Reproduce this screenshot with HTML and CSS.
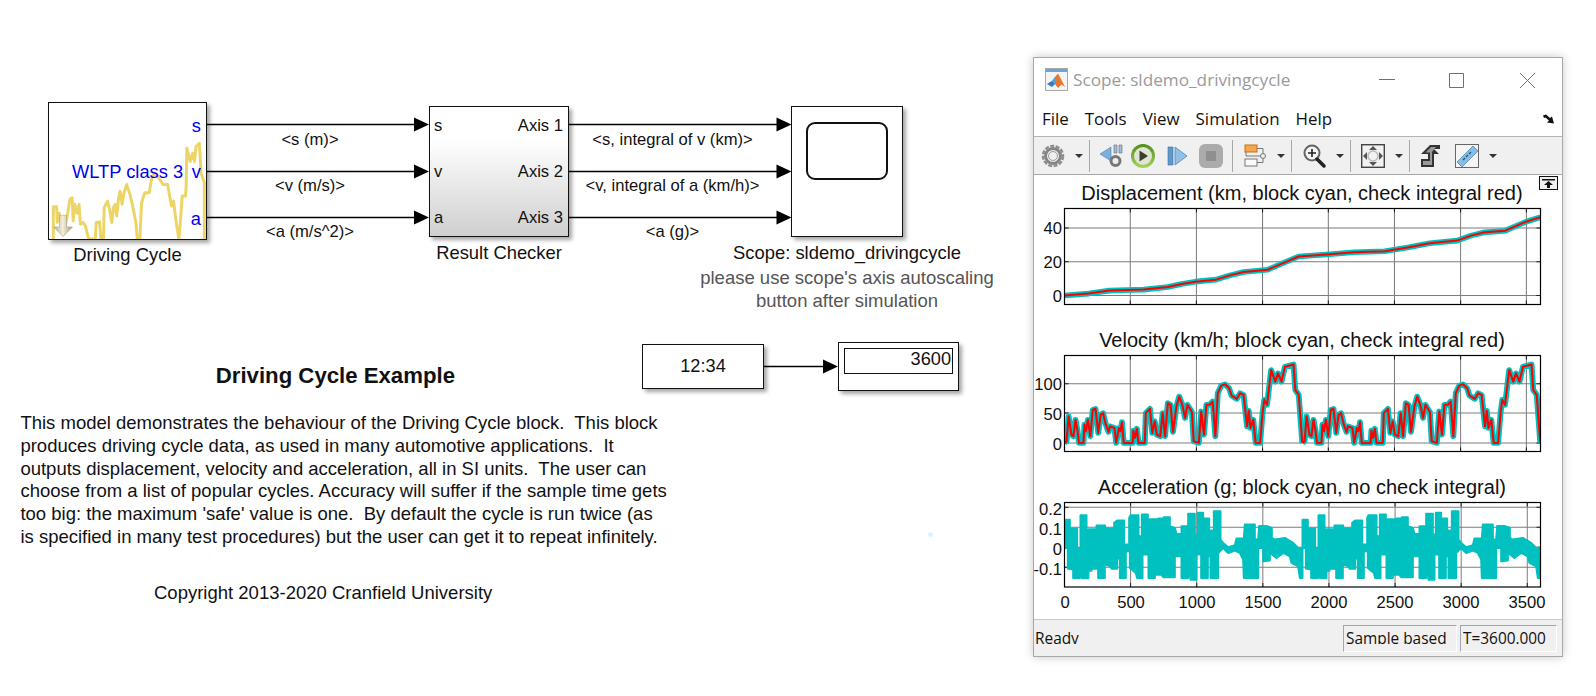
FILE: index.html
```html
<!DOCTYPE html>
<html lang="en">
<head>
<meta charset="utf-8">
<title>Scope: sldemo_drivingcycle</title>
<link rel="stylesheet" href="styles.css">
</head>
<body>
<main class="canvas">
  <svg class="wires" width="1030" height="420" viewBox="0 0 1030 420">
    <path class="wire" d="M207 124.5H416M207 171.5H416M207 217.5H416M569 124.5H778M569 171.5H778M569 217.5H778M764 366.5H824"/>
    <path class="head" d="M414 117.5L429 124.5L414 131.5ZM414 164.5L429 171.5L414 178.5ZM414 210.5L429 217.5L414 224.5ZM776.500 117.5L791.500 124.500L776.500 131.500ZM776.500 164.500L791.500 171.500L776.500 178.500ZM776.500 210.500L791.500 217.500L776.500 224.500ZM823 359.500L838 366.500L823 373.500Z"/>
    <text class="wire-text" x="310" y="145">&lt;s (m)&gt;</text>
    <text class="wire-text" x="310" y="191">&lt;v (m/s)&gt;</text>
    <text class="wire-text" x="310" y="237">&lt;a (m/s^2)&gt;</text>
    <text class="wire-text" x="672.500" y="145">&lt;s, integral of v (km)&gt;</text>
    <text class="wire-text" x="672.500" y="191">&lt;v, integral of a (km/h)&gt;</text>
    <text class="wire-text" x="672.500" y="237">&lt;a (g)&gt;</text>
  </svg>

  <section class="block source">
    <svg class="spark" viewBox="55 38 475 412" preserveAspectRatio="none">
      <polyline class="spark-line" points="68,450 68,352 78,352 80,400 86,372 92,395 100,380 106,402 112,370 118,330 125,325 128,395 133,345 140,372 146,345 150,405 158,400 165,410 175,450 182,450 195,450 198,400 208,398 212,450 220,450 222,355 232,335 238,360 245,400 250,355 255,345 260,380 265,330 270,305 276,345 282,310 290,285 300,315 308,350 318,400 322,450 330,450 335,340 345,310 358,310 365,270 372,250 385,262 400,285 414,285 420,320 426,350 432,335 436,370 440,400 448,450 452,405 458,320 468,320 470,290 472,175 482,215 490,190 495,215 500,170 510,160 515,250 525,280 525,450"/>
    </svg>
    <svg class="lib-arrow" width="20" height="22" viewBox="0 0 20 22">
      <defs>
        <linearGradient id="arrowFill" x1="0" x2="1" y1="0" y2="0">
          <stop offset="0" stop-color="#b9b08a"/><stop offset=".5" stop-color="#f1eeda"/><stop offset="1" stop-color="#a39a72"/>
        </linearGradient>
      </defs>
      <path d="M6.500 0H13.500V12H19.500L10 21.500L.5 12H6.500Z" fill="url(#arrowFill)" stroke="#a8a27f" stroke-width=".6"/>
    </svg>
    <span class="port port-s">s</span>
    <span class="port port-v">v</span>
    <span class="port port-a">a</span>
    <span class="source-name">WLTP class 3</span>
    <span class="caption">Driving Cycle</span>
  </section>

  <section class="block checker">
    <span class="in in-s">s</span><span class="in in-v">v</span><span class="in in-a">a</span>
    <span class="out out-1">Axis 1</span><span class="out out-2">Axis 2</span><span class="out out-3">Axis 3</span>
    <span class="caption">Result Checker</span>
  </section>

  <section class="block scope">
    <div class="screen"></div>
    <span class="caption">Scope: sldemo_drivingcycle</span>
  </section>
  <p class="scope-note">please use scope's axis autoscaling<br>button after simulation</p>

  <section class="block clock">12:34</section>
  <section class="block display"><div class="readout">3600</div></section>

  <h2 class="doc-title">Driving Cycle Example</h2>
  <p class="doc-body">This model demonstrates the behaviour of the Driving Cycle block.  This block
produces driving cycle data, as used in many automotive applications.  It
outputs displacement, velocity and acceleration, all in SI units.  The user can
choose from a list of popular cycles. Accuracy will suffer if the sample time gets
too big: the maximum 'safe' value is one.  By default the cycle is run twice (as
is specified in many test procedures) but the user can get it to repeat infinitely.</p>
  <p class="doc-copy">Copyright 2013-2020 Cranfield University</p>
  <i class="speck"></i>

  <article class="window">
    <header class="titlebar">
      <svg class="app-icon" width="23" height="23" viewBox="0 0 23 23">
        <rect x=".5" y=".5" width="22" height="22" fill="#f4f4f4" stroke="#a9a9a9"/>
        <rect x="1" y="1" width="21" height="3" fill="#6aa5d8"/>
        <path d="M2 16L7 13L10 9L13 5.500L16 11L20 19L16.500 16.500L13 20L10 16L7 15Z" fill="#e8762b"/>
        <path d="M2 16L7 13L10 16L7 19Z" fill="#2f7fc4"/>
        <path d="M7 13L10 9L11.500 12L10 16Z" fill="#4aa6dd"/>
      </svg>
      <span class="title-text">Scope: sldemo_drivingcycle</span>
      <svg class="win-controls" width="157" height="16" viewBox="0 0 157 16">
        <path d="M0 7.500H16M70.500 1.500H84.500V15.500H70.500ZM141 1L156 16M156 1L141 16"/>
      </svg>
    </header>
    <nav class="menubar">
      <span class="menu-item">File</span>
      <span class="menu-item">Tools</span>
      <span class="menu-item">View</span>
      <span class="menu-item">Simulation</span>
      <span class="menu-item">Help</span>
      <svg class="menu-pin" width="12" height="10" viewBox="0 0 12 10">
        <path d="M0 1.500L3 .5L7 4L9 2.500L11 9.500L4 8.500L6 6.500L2.500 3.500L1 4Z" fill="#111"/>
      </svg>
    </nav>
    <div class="toolbar">
      <svg class="tool first" viewBox="0 0 24 24">
        <circle cx="12" cy="12" r="10" fill="none" stroke="#8f8f8f" stroke-width="2.500" stroke-dasharray="4 1.500"/>
        <circle cx="12" cy="12" r="7.500" fill="none" stroke="#858585" stroke-width="3"/>
        <circle cx="12" cy="12" r="4.500" fill="#eee" stroke="#9a9a9a"/>
      </svg>
      <i class="drop"></i><i class="sep"></i>
      <svg class="tool" viewBox="0 0 24 24">
        <path d="M0 10L11 3V17Z" fill="#7aaedb" stroke="#4f7fb0" stroke-width=".6"/>
        <path d="M14 1H17V9H14ZM19 1H22V9H19Z" fill="#9cbfdd" stroke="#6a6a6a" stroke-width=".6"/>
        <circle cx="15.500" cy="17" r="4.500" fill="#eee" stroke="#777" stroke-width="3"/>
      </svg>
      <svg class="tool snug" viewBox="0 0 24 24">
        <defs>
          <linearGradient id="playRing" x1="0" x2="0" y1="0" y2="1">
            <stop offset="0" stop-color="#4f8c18"/><stop offset="1" stop-color="#a5d45c"/>
          </linearGradient>
        </defs>
        <circle cx="12" cy="12" r="12" fill="url(#playRing)"/>
        <circle cx="12" cy="12" r="9" fill="#dfe6cf"/>
        <path d="M8.500 6.500L17 12L8.500 17.500Z" fill="#3b3f30"/>
      </svg>
      <svg class="tool wide" viewBox="0 0 24 24">
        <path d="M3 3H8V21H3Z" fill="#5f98cb" stroke="#3f6f9e" stroke-width=".6"/>
        <path d="M10 3L22 12L10 21Z" fill="#8fc0e8" stroke="#5688b5" stroke-width=".8"/>
      </svg>
      <svg class="tool wide" viewBox="0 0 24 24">
        <rect x="0" y="0" width="24" height="24" rx="6" fill="#ababab"/>
        <rect x="7" y="7" width="10" height="10" fill="#8f8f8f"/>
      </svg>
      <i class="sep far"></i>
      <svg class="tool" viewBox="0 0 24 24">
        <rect x="2" y="1" width="12" height="7" fill="#f3a84e" stroke="#c96f14"/>
        <rect x="2" y="15" width="12" height="7" fill="#fafafa" stroke="#777"/>
        <circle cx="20" cy="12" r="2.500" fill="#eee" stroke="#777"/>
        <path d="M14 4.500H20V9.500M14 18.500H20V14.500M3 8V12H17" fill="none" stroke="#777"/>
      </svg>
      <i class="drop"></i><i class="sep"></i>
      <svg class="tool" viewBox="0 0 24 24">
        <circle cx="10" cy="9" r="7.500" fill="#f4f4f4" stroke="#666" stroke-width="2"/>
        <path d="M10 5V13M6 9H14" stroke="#222" stroke-width="1.600"/>
        <path d="M15 15L22 22" stroke="#222" stroke-width="3.500" stroke-linecap="round"/>
      </svg>
      <i class="drop"></i><i class="sep"></i>
      <svg class="tool" viewBox="0 0 24 24">
        <rect x=".7" y=".7" width="22.600" height="22.600" fill="#f2f2f2" stroke="#444" stroke-width="1.400"/>
        <path d="M12 2L16 6H8ZM12 22L8 18H16ZM2 12L6 8V16ZM22 12L18 16V8Z" fill="#555"/>
        <circle cx="12" cy="12" r="5" fill="none" stroke="#bbb" stroke-width="1.500"/>
      </svg>
      <i class="drop"></i><i class="sep"></i>
      <svg class="tool snug" viewBox="0 0 24 24">
        <path d="M2 23V15H9V10H2L11 1H21V5H15L20 10H15V23Z" fill="#333"/>
        <path d="M4 21V17H11V8.500H6.500L12 3H17L12.500 8.500H13V21Z" fill="#9a9a9a"/>
      </svg>
      <svg class="tool roomy" viewBox="0 0 24 24">
        <rect x=".5" y=".5" width="23" height="23" fill="#f5f5f5" stroke="#666"/>
        <path d="M2 18L18 2L23 7L7 23Z" fill="#86bfe6" stroke="#4d86b2" stroke-width=".8"/>
        <path d="M8 16L10 14M11 13L13 11M14 10L16 8" stroke="#1f5479" stroke-width="1.300"/>
      </svg>
      <i class="drop"></i>
    </div>

    <div class="plots">
      <button class="undock" type="button" aria-label="Undock">
        <svg width="13" height="9" viewBox="0 0 13 9"><path d="M0 0H13V1.500H0ZM6.500 2L11 6H8V9H5V6H2Z" fill="#111"/></svg>
      </button>
      <figure class="plot">
        <figcaption class="plot-title">Displacement (km, block cyan, check integral red)</figcaption>
        <svg class="chart" width="528" height="97">
          <svg x="30.500" y="0.500" width="476" height="96" viewBox="100 98 1382 290" preserveAspectRatio="none">
            <path class="grid" d="M291 98V388M483 98V388M675 98V388M866 98V388M1058 98V388M1250 98V388M1441 98V388M100 157H1482M100 259H1482M100 361H1482"/>
            <path class="tick" d="M291 98V110M483 98V110M675 98V110M866 98V110M1058 98V110M1250 98V110M1441 98V110M291 388V376M483 388V376M675 388V376M866 388V376M1058 388V376M1250 388V376M1441 388V376M100 157H112M100 259H112M100 361H112M1482 157H1470M1482 259H1470M1482 361H1470"/>
            <polyline class="trace-cyan" points="100,361 170,355 230,346 330,343 400,335 440,326 480,319 540,313 580,300 620,290 690,283 730,265 780,243 870,236 940,230 1030,227 1100,215 1160,203 1240,195 1280,180 1320,170 1380,165 1440,138 1482,124"/>
            <polyline class="trace-red" points="100,361 170,355 230,346 330,343 400,335 440,326 480,319 540,313 580,300 620,290 690,283 730,265 780,243 870,236 940,230 1030,227 1100,215 1160,203 1240,195 1280,180 1320,170 1380,165 1440,138 1482,124"/>
          </svg>
          <rect class="frame" x="30.500" y="0.500" width="476" height="96"/>
          <text class="y-label" x="28" y="25.500">40</text>
          <text class="y-label" x="28" y="59.500">20</text>
          <text class="y-label" x="28" y="93.500">0</text>
        </svg>
      </figure>
      <figure class="plot">
        <figcaption class="plot-title">Velocity (km/h; block cyan, check integral red)</figcaption>
        <svg class="chart" width="528" height="97">
          <svg x="30.500" y="0.500" width="476" height="96" viewBox="100 91 1382 290" preserveAspectRatio="none">
            <defs>
              <polyline id="vel" points="100,355 106,350 112,275 120,330 126,335 132,285 138,320 142,355 155,355 158,300 162,320 168,285 175,335 182,255 190,252 198,325 205,270 212,265 220,300 228,322 232,305 245,310 250,355 258,310 262,320 267,292 272,355 298,355 300,318 305,340 310,312 315,355 333,355 336,265 348,252 355,325 362,290 368,330 378,335 385,265 392,335 400,235 408,240 415,322 425,245 433,215 442,240 450,280 457,240 470,262 475,350 490,355 497,260 505,330 512,240 522,240 530,230 538,335 545,205 555,182 566,178 578,190 585,212 600,222 610,205 620,210 630,305 635,258 640,310 648,285 655,355 668,355 675,265 680,225 688,240 700,135 712,170 720,145 730,170 740,125 765,118 770,195 780,210 790,350 791,355"/>
            </defs>
            <path class="grid" d="M291 91V381M483 91V381M675 91V381M866 91V381M1058 91V381M1250 91V381M1441 91V381M100 176H1482M100 265H1482M100 355H1482"/>
            <path class="tick" d="M291 91V103M483 91V103M675 91V103M866 91V103M1058 91V103M1250 91V103M1441 91V103M291 381V369M483 381V369M675 381V369M866 381V369M1058 381V369M1250 381V369M1441 381V369M100 176H112M100 265H112M100 355H112M1482 176H1470M1482 265H1470M1482 355H1470"/>
            <use href="#vel" class="trace-cyan"/>
            <use href="#vel" class="trace-cyan" x="691"/>
            <use href="#vel" class="trace-red"/>
            <use href="#vel" class="trace-red" x="691"/>
          </svg>
          <rect class="frame" x="30.500" y="0.500" width="476" height="96"/>
          <text class="y-label" x="28" y="35">100</text>
          <text class="y-label" x="28" y="64.500">50</text>
          <text class="y-label" x="28" y="94.500">0</text>
        </svg>
      </figure>
      <figure class="plot">
        <figcaption class="plot-title">Acceleration (g; block cyan, no check integral)</figcaption>
        <svg class="chart" width="528" height="116">
          <svg x="30.500" y="0.500" width="476" height="84.500" viewBox="14 14 1428 253" preserveAspectRatio="none">
            <defs>
              <polygon id="acc" points="14,66 30,66 30,92 52,92 52,150 62,150 62,52 80,52 80,100 86,100 86,94 106,94 106,105 110,105 110,83 136,83 136,120 140,120 140,92 158,92 158,125 163,125 163,75 172,68 193,68 193,140 208,140 208,60 212,52 236,52 236,115 246,115 246,50 264,50 264,110 270,110 270,64 290,64 290,90 295,90 295,62 310,62 312,58 330,58 330,85 345,90 350,108 365,108 365,85 385,85 385,48 405,48 405,110 414,110 414,45 430,45 430,62 448,62 448,98 462,98 462,40 482,40 482,125 490,135 505,148 525,142 530,122 552,122 555,80 585,80 585,125 595,125 598,84 620,84 636,90 636,120 645,125 675,120 700,135 715,150 728,150 728,240 720,240 715,205 695,195 690,175 670,165 650,180 630,165 630,188 610,190 610,150 595,150 595,240 552,240 550,185 540,165 525,158 505,165 490,150 475,165 475,240 452,240 452,175 444,175 444,240 424,240 424,170 410,170 410,245 392,245 385,170 385,240 365,240 365,175 345,175 345,238 310,238 305,230 285,230 285,240 266,240 266,170 248,170 248,240 232,240 228,225 210,210 210,160 198,160 198,240 180,240 180,182 172,182 172,212 155,212 152,205 135,200 135,240 115,240 115,212 100,212 100,185 95,185 95,218 86,218 86,240 66,240 66,180 60,180 60,240 40,240 40,215 24,212 24,150 14,150"/>
            </defs>
            <path class="grid" d="M212.300 14V267M410.700 14V267M609 14V267M807.300 14V267M1005.700 14V267M1204 14V267M1402.300 14V267M14 28H1442M14 88H1442M14 148H1442M14 208H1442"/>
            <path class="tick" d="M212.300 14V26M410.700 14V26M609 14V26M807.300 14V26M1005.700 14V26M1204 14V26M1402.300 14V26M212.300 267V255M410.700 267V255M609 267V255M807.300 267V255M1005.700 267V255M1204 267V255M1402.300 267V255M14 28H26M14 88H26M14 148H26M14 208H26M1442 28H1430M1442 88H1430M1442 148H1430M1442 208H1430"/>
            <use href="#acc" class="trace-fill"/>
            <use href="#acc" class="trace-fill" x="714"/>
          </svg>
          <rect class="frame" x="30.500" y="0.500" width="476" height="84.500"/>
          <text class="y-label" x="28" y="13">0.2</text>
          <text class="y-label" x="28" y="33">0.1</text>
          <text class="y-label" x="28" y="53">0</text>
          <text class="y-label" x="28" y="73">-0.1</text>
          <text class="x-label" x="31" y="106">0</text>
          <text class="x-label" x="97" y="106">500</text>
          <text class="x-label" x="163" y="106">1000</text>
          <text class="x-label" x="229" y="106">1500</text>
          <text class="x-label" x="295" y="106">2000</text>
          <text class="x-label" x="361" y="106">2500</text>
          <text class="x-label" x="427" y="106">3000</text>
          <text class="x-label" x="493" y="106">3500</text>
        </svg>
      </figure>
    </div>

    <footer class="statusbar">
      <span class="status-text"><span class="clip">Ready</span></span>
      <span class="status-cell cell-mode"><span class="clip">Sample based</span></span>
      <span class="status-cell cell-time"><span class="clip">T=3600.000</span></span>
    </footer>
  </article>
</main>
</body>
</html>
```
FILE: styles.css
```css
* { box-sizing: border-box; }
html, body { margin: 0; padding: 0; background: #fff; }
body { font-family: "Liberation Sans", Arial, sans-serif; color: #111; overflow: hidden; }

.canvas { position: relative; width: 1596px; height: 696px; overflow: hidden; }

/* Diagram */
.wires { position: absolute; left: 0; top: 0; }
.wire { fill: none; stroke: #000; stroke-width: 1.3; }
.head { fill: #000; }
.wire-text { font-size: 16.6px; text-anchor: middle; fill: #111; }

.block {
  position: absolute;
  background: #fff;
  border: 1.5px solid #111;
  box-shadow: 3px 3px 4px rgba(0, 0, 0, .35);
  font-size: 16.6px;
}
.caption {
  position: absolute;
  left: 50%;
  transform: translateX(-50%);
  white-space: nowrap;
  font-size: 18.4px;
  line-height: 22px;
}

.source { left: 48px; top: 102px; width: 159px; height: 138px; }
.source .caption { top: 141px; }
.spark { position: absolute; left: 0; top: 0; width: 100%; height: 100%; }
.spark-line { fill: none; stroke: #ecd566; stroke-width: 9; stroke-linejoin: round; }
.lib-arrow { position: absolute; left: 4px; bottom: 2px; }
.port, .source-name { position: absolute; color: #0000ee; font-size: 18.3px; line-height: 20px; }
.port { right: 5px; }
.port-s { top: 13px; }
.port-v { top: 59px; }
.port-a { top: 106px; }
.source-name { left: 23px; top: 59px; white-space: nowrap; }

.checker {
  left: 429px; top: 106px; width: 140px; height: 131px;
  background: linear-gradient(#fff 0%, #fff 25%, #cfcfcf 100%);
}
.in, .out { position: absolute; line-height: 20px; }
.in { left: 4px; }
.out { right: 5px; }
.in-s, .out-1 { top: 9px; }
.in-v, .out-2 { top: 55px; }
.in-a, .out-3 { top: 101px; }
.checker .caption { top: 135px; }

.scope { left: 791px; top: 106px; width: 112px; height: 131px; }
.screen { margin: 15px 0 0 14px; width: 82px; height: 58px; border: 2px solid #111; border-radius: 9px; }
.scope .caption { top: 135px; }
.scope-note {
  position: absolute; left: 680px; top: 267px; width: 334px; margin: 0;
  font-size: 18.500px; line-height: 22.500px; text-align: center; color: #555;
}

.clock {
  left: 642px; top: 344px; width: 122px; height: 45px; font-size: 18.200px;
  display: flex; align-items: center; justify-content: center;
}
.display { left: 838px; top: 342px; width: 121px; height: 49px; padding: 5px 5px 0 5px; font-size: 18.200px; }
.readout {
  height: 26px; border: 1.5px solid #111; text-align: right;
  line-height: 20px; padding-right: 1px;
}

/* Annotations */
.doc-title {
  position: absolute; left: 215.400px; top: 363px; margin: 0; width: 240px;
  font-size: 22.200px; line-height: 26px; font-weight: 700; text-align: center; white-space: nowrap;
}
.doc-body {
  position: absolute; left: 20.400px; top: 412px; margin: 0;
  font-size: 18.500px; line-height: 22.800px; white-space: pre;
}
.doc-copy {
  position: absolute; left: 154px; top: 582px; margin: 0;
  font-size: 18.500px; line-height: 22px; white-space: nowrap;
}
.speck { position: absolute; left: 928px; top: 532px; width: 5px; height: 5px; border-radius: 50%; background: #dff2fc; }

/* Scope window */
.window {
  position: absolute; left: 1033px; top: 57px; width: 530px; height: 600px;
  display: flex; flex-direction: column;
  background: #fff; border: 1px solid #a8a8a8;
  box-shadow: 0 0 9px rgba(0, 0, 0, .22);
}
.titlebar { display: flex; align-items: center; height: 43px; padding: 0 0 0 11px; flex: none; }
.app-icon { flex: none; }
.title-text {
  margin-left: 5px; font-family: "Open Sans", "Noto Sans", sans-serif; font-size: 17.200px;
  color: #9a9a9a; white-space: nowrap;
}
.win-controls { margin-left: auto; margin-right: 26px; flex: none; }
.win-controls path { fill: none; stroke: #707070; stroke-width: 1; }

.menubar {
  display: flex; align-items: center; height: 35px; padding: 0 0 0 8px; flex: none;
  font-family: "Open Sans", "Noto Sans", sans-serif; font-size: 16.900px; color: #111;
}
.menu-item { margin-right: 16px; white-space: nowrap; }
.menu-pin { margin-left: auto; margin-right: 7px; }

.toolbar {
  display: flex; align-items: center; height: 39px; padding: 0 0 0 7px; flex: none;
  background: #f0f0f0; border-top: 1px solid #b4b4b4; border-bottom: 1px solid #a8a8a8;
}
.tool { flex: none; width: 24px; height: 24px; margin-left: 8px; overflow: visible; }
.tool.first { margin-left: 0; }
.tool.snug { margin-left: 7px; }
.tool.wide { margin-left: 10px; }
.tool.roomy { margin-left: 12px; }
.drop { flex: none; margin-left: 10px; width: 0; height: 0; border: 4px solid transparent; border-top: 4px solid #333; border-bottom: 0; }
.sep { flex: none; margin-left: 6px; margin-right: 2px; width: 1px; height: 32px; background: #a8a8a8; }
.sep.far { margin-left: 9px; }

.plots { position: relative; flex: 1; min-height: 0; display: flex; flex-direction: column; gap: 17px; background: #fff; }
.plot { margin: 0; display: flex; flex-direction: column; }
.plot-title {
  height: 33px; padding-left: 28px; padding-right: 20px; width: 528px;
  text-align: center; font-size: 20px; line-height: 37px; white-space: nowrap; color: #111;
}
.chart { display: block; flex: none; overflow: visible; }
.undock {
  position: absolute; right: 4px; top: 1px; width: 19px; height: 14px; padding: 0;
  display: flex; align-items: center; justify-content: center;
  background: #f0f0f0; border: 1px solid #111;
}
.grid { fill: none; stroke: #7c7c7c; stroke-width: 3; }
.tick { fill: none; stroke: #222; stroke-width: 3; }
.trace-cyan { fill: none; stroke: #00c0c0; stroke-width: 17; stroke-linejoin: round; }
.trace-red { fill: none; stroke: #f00; stroke-width: 6; stroke-linejoin: round; }
.trace-fill { fill: #00c0c0; stroke: #00c0c0; stroke-width: 6; stroke-linejoin: round; }
.frame { fill: none; stroke: #000; stroke-width: 1.200; }
.y-label { font-size: 16.600px; text-anchor: end; fill: #111; }
.x-label { font-size: 16.600px; text-anchor: middle; fill: #111; }

.statusbar {
  display: flex; align-items: flex-start; height: 37px; flex: none;
  background: #f0f0f0; border-top: 1px solid #c8c8c8; padding: 5px 5px 4px 1px;
  font-family: "Open Sans", "Noto Sans", sans-serif; font-size: 15.400px; color: #111;
}
.status-text { margin-right: auto; padding-top: 3px; }
.clip { display: block; height: 15.500px; line-height: 22px; overflow: hidden; white-space: nowrap; }
.status-cell {
  height: 27px; overflow: hidden; padding-top: 2px;
  border-top: 1px solid #a6a6a6; border-left: 1px solid #a6a6a6;
  border-right: 1px solid #fff; border-bottom: 1px solid #fff; padding-left: 2px;
}
.cell-mode { width: 114px; margin-right: 3px; }
.cell-time { width: 97px; }
```
